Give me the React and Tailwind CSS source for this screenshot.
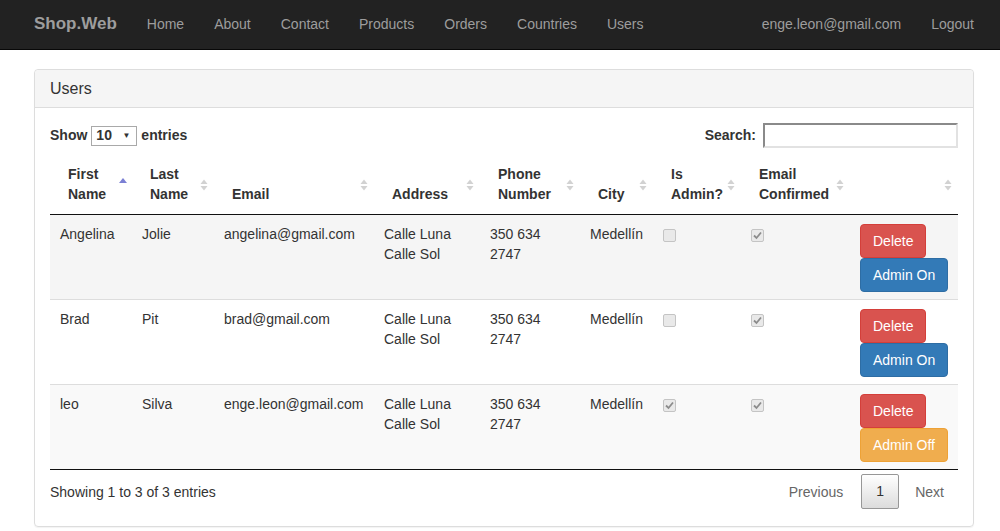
import React from "react";

const navLinks = ["Home", "About", "Contact", "Products", "Orders", "Countries", "Users"];

const columns = [
  { label: ["First", "Name"], w: "w-[82px]", sort: "asc" },
  { label: ["Last", "Name"], w: "w-[82px]" },
  { label: ["Email"], w: "w-[160px]" },
  { label: ["Address"], w: "w-[106px]" },
  { label: ["Phone", "Number"], w: "w-[100px]" },
  { label: ["City"], w: "w-[73px]" },
  { label: ["Is", "Admin?"], w: "w-[88px]" },
  { label: ["Email", "Confirmed"], w: "w-[109px]" },
  { label: [], w: "w-[108px]" },
];

const users = [
  { first: "Angelina", last: "Jolie", email: "angelina@gmail.com", admin: false, bg: "bg-[#f5f5f5]" },
  { first: "Brad", last: "Pit", email: "brad@gmail.com", admin: false, bg: "bg-white" },
  { first: "leo", last: "Silva", email: "enge.leon@gmail.com", admin: true, bg: "bg-[#f9f9f9]" },
];

function SortIcon({ active }) {
  if (active) {
    return (
      <svg width="8" height="14" viewBox="0 0 8 14" className="absolute right-[5px] top-1/2 -translate-y-1/2">
        <path d="M0 6 L4 1 L8 6 Z" fill="#7b80d4" />
      </svg>
    );
  }
  return (
    <svg width="8" height="14" viewBox="0 0 8 14" className="absolute right-[6px] top-1/2 mt-[1px] -translate-y-1/2">
      <path d="M0.5 6 L4 1.5 L7.5 6 Z" fill="#d2d2d2" />
      <path d="M0.5 8 L4 12.5 L7.5 8 Z" fill="#d2d2d2" />
    </svg>
  );
}

function Check({ checked }) {
  return (
    <span className="mt-[5px] flex h-[13px] w-[13px] items-center justify-center rounded-[2px] border border-[#c4c4c4] bg-[#e9e9e9]">
      {checked && (
        <svg width="9" height="9" viewBox="0 0 9 9">
          <path d="M1 4.5 L3.5 7 L8 1.5" stroke="#8c8c8c" strokeWidth="1.8" fill="none" />
        </svg>
      )}
    </span>
  );
}

export default function App() {
  return (
    <div className="min-h-screen bg-white text-[14px] text-[#333] font-['Liberation_Sans',Arial,sans-serif]">
      <nav className="h-[50px] border-b border-[#080808] bg-[#222]">
        <div className="ml-[34px] flex w-[940px] items-center justify-between">
          <div className="flex items-center">
            <span className="-ml-[15px] px-[15px] pt-[14px] pb-[16px] text-[17px] font-bold leading-[20px] text-[#9d9d9d]">Shop.Web</span>
            {navLinks.map((l) => (
              <span key={l} className="px-[15px] pt-[14px] pb-[16px] leading-[20px] text-[#9d9d9d]">
                {l}
              </span>
            ))}
          </div>
          <div className="-mr-[15px] flex items-center">
            <span className="px-[15px] pt-[14px] pb-[16px] leading-[20px] text-[#9d9d9d]">enge.leon@gmail.com</span>
            <span className="px-[15px] pt-[14px] pb-[16px] leading-[20px] text-[#9d9d9d]">Logout</span>
          </div>
        </div>
      </nav>

      <div className="ml-[34px] mt-[19px] w-[940px] rounded-[4px] border border-[#ddd] shadow-[0_1px_1px_rgba(0,0,0,0.05)]">
        <div className="rounded-t-[4px] border-b border-[#ddd] bg-[#f5f5f5] px-[15px] py-[9px] text-[16px] leading-[19px]">
          Users
        </div>
        <div className="px-[15px] pt-[15px] pb-[17px]">
          <div className="flex items-center justify-between">
            <div className="flex items-center gap-[4px] text-[14px] font-bold">
              <span>Show</span>
              <span className="flex h-[20px] w-[46px] items-center justify-between border border-[#a9a9a9] bg-white pl-[4px] pr-[6px] font-bold">
                <span>10</span>
                <span className="text-[8px] font-normal">▼</span>
              </span>
              <span>entries</span>
            </div>
            <div className="flex items-center gap-[7px] text-[14px] font-bold">
              <span>Search:</span>
              <span className="h-[25px] w-[195px] border-2 border-t-[#8a8a8a] border-l-[#8a8a8a] border-r-[#e2e2e2] border-b-[#e2e2e2] bg-white" />
            </div>
          </div>

          <table className="mt-[6px] w-full table-fixed border-collapse">
            <colgroup>
              {columns.map((c, i) => (
                <col key={i} className={c.w} />
              ))}
            </colgroup>
            <thead>
              <tr className="border-b border-[#111]">
                {columns.map((c, i) => (
                  <th key={i} className="relative px-[18px] py-[10px] text-left align-bottom text-[14px] font-bold leading-[20px]">
                    {c.label.map((t, j) => (
                      <div key={j}>{t}</div>
                    ))}
                    <SortIcon active={c.sort === "asc"} />
                  </th>
                ))}
              </tr>
            </thead>
            <tbody>
              {users.map((u, i) => (
                <tr key={u.first} className={`${u.bg} ${i < users.length - 1 ? "border-b border-[#ddd]" : "border-b border-[#111]"}`}>
                  <td className="px-[10px] py-[9px] align-top leading-[20px]">{u.first}</td>
                  <td className="px-[10px] py-[9px] align-top leading-[20px]">{u.last}</td>
                  <td className="whitespace-nowrap px-[10px] py-[9px] align-top leading-[20px]">{u.email}</td>
                  <td className="px-[10px] py-[9px] align-top leading-[20px]">
                    <div>Calle Luna</div>
                    <div>Calle Sol</div>
                  </td>
                  <td className="px-[10px] py-[9px] align-top leading-[20px]">
                    <div>350 634</div>
                    <div>2747</div>
                  </td>
                  <td className="px-[10px] py-[9px] align-top leading-[20px]">Medellín</td>
                  <td className="px-[10px] py-[9px] align-top">
                    <Check checked={u.admin} />
                  </td>
                  <td className="px-[10px] py-[9px] align-top">
                    <Check checked />
                  </td>
                  <td className="px-[10px] pt-[9px] pb-[7px] align-top">
                    <div className="flex flex-col items-start">
                      <button className="h-[34px] whitespace-nowrap rounded-[4px] border border-[#d43f3a] bg-[#d9534f] px-[12px] text-[14px] text-white">
                        Delete
                      </button>
                      {u.admin ? (
                        <button className="h-[34px] whitespace-nowrap rounded-[4px] border border-[#eea236] bg-[#f0ad4e] px-[12px] text-[14px] text-white">
                          Admin Off
                        </button>
                      ) : (
                        <button className="h-[34px] whitespace-nowrap rounded-[4px] border border-[#2e6da4] bg-[#337ab7] px-[12px] text-[14px] text-white">
                          Admin On
                        </button>
                      )}
                    </div>
                  </td>
                </tr>
              ))}
            </tbody>
          </table>

          <div className="flex items-start justify-between">
            <div className="pt-[12px] leading-[20px]">Showing 1 to 3 of 3 entries</div>
            <div className="flex items-center pt-[4px]">
              <span className="px-[14px] py-[7px] leading-[20px] text-[#666]">Previous</span>
              <span className="ml-[4px] flex h-[35px] w-[38px] items-center justify-center rounded-[2px] border border-[#979797] bg-gradient-to-b from-white to-[#dcdcdc]">
                1
              </span>
              <span className="ml-[2px] px-[14px] py-[7px] leading-[20px] text-[#666]">Next</span>
            </div>
          </div>
        </div>
      </div>
    </div>
  );
}
